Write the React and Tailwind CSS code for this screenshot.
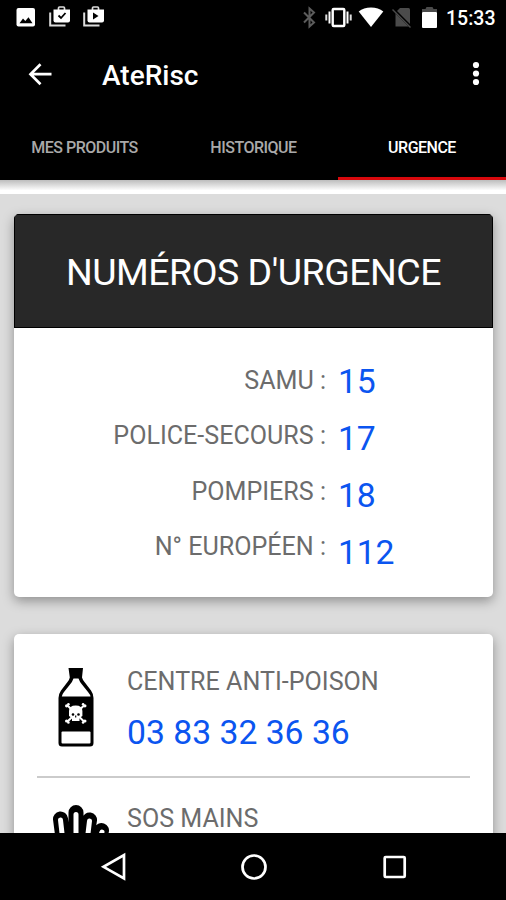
import React, { useState } from 'react';

const TABS = ['MES PRODUITS', 'HISTORIQUE', 'URGENCE'];

const EMERGENCY_NUMBERS = [
  { label: 'SAMU :', number: '15' },
  { label: 'POLICE-SECOURS :', number: '17' },
  { label: 'POMPIERS :', number: '18' },
  { label: 'N° EUROPÉEN :', number: '112' },
];

const StatusBar = () => (
  <div className="flex h-9 shrink-0 items-center pl-4 pr-[11px]">
    <svg width="20" height="36" viewBox="0 0 20 36">
      <rect x="0.5" y="8" width="18.500" height="18.500" rx="2" fill="#fff" />
      <path d="M3.500 23.300 7 18.500 9.300 21 12.500 17.300 16.500 23.300Z" fill="#000" />
    </svg>
    <svg className="ml-[13px]" width="22" height="36" viewBox="0 0 22 36">
      <path d="M1.200 12.500V25.500H16.500" fill="none" stroke="#ddd" strokeWidth="2" />
      <path d="M9.500 10V8Q9.500 7 10.500 7H14.500Q15.500 7 15.500 8V10" fill="none" stroke="#ddd" strokeWidth="1.700" />
      <path d="M4.500 9.500H21V20.500Q21 22.500 19 22.500H6.500Q4.500 22.500 4.500 20.500Z" fill="#fff" />
      <path d="M9.500 15.500 12 18 16.500 13" fill="none" stroke="#000" strokeWidth="1.800" />
    </svg>
    <svg className="ml-3" width="22" height="36" viewBox="0 0 22 36">
      <path d="M1.200 12.500V25.500H16.500" fill="none" stroke="#ddd" strokeWidth="2" />
      <path d="M9.500 10V8Q9.500 7 10.500 7H14.500Q15.500 7 15.500 8V10" fill="none" stroke="#ddd" strokeWidth="1.700" />
      <path d="M4.500 9.500H21V20.500Q21 22.500 19 22.500H6.500Q4.500 22.500 4.500 20.500Z" fill="#fff" />
      <path d="M10 12.500 15.500 16 10 19.500Z" fill="#000" />
    </svg>

    {/* System icons */}
    <svg className="ml-auto" width="15" height="36" viewBox="0 0 15 36">
      <path d="M2 12.500 12 22.500 7.500 26.500V8.500L12 12.500 2 22.500" fill="none" stroke="#5c5c5c" strokeWidth="2" />
    </svg>
    <svg className="ml-[8px]" width="27" height="36" viewBox="0 0 27 36">
      <rect x="7.700" y="9" width="11.600" height="17" rx="1" fill="none" stroke="#fff" strokeWidth="2.400" />
      <path d="M4.500 11.500V23.500M22.500 11.500V23.500" stroke="#fff" strokeWidth="2" />
      <path d="M1.300 14.500V20.500M25.700 14.500V20.500" stroke="#ddd" strokeWidth="2" />
    </svg>
    <svg className="ml-[6px]" width="26" height="36" viewBox="0 0 26 36">
      <path d="M13 27 .7 11.500C4 8.800 8 7.600 13 7.600S22 8.800 25.300 11.500Z" fill="#fff" />
    </svg>
    <svg className="ml-[8px]" width="20" height="36" viewBox="0 0 20 36">
      <path d="M8 8H16.500Q18 8 18 9.500V26.500H3.500V12.500Z" fill="#4b4b4b" />
      <path d="M.5 8.500 19 27" stroke="#000" strokeWidth="3" />
      <path d="M.5 9.500 18.500 27.500" stroke="#4b4b4b" strokeWidth="1.400" />
    </svg>
    <svg className="ml-[9px]" width="17" height="36" viewBox="0 0 17 36">
      <path d="M1 12V9H4.500L5.500 7H11.500L12.500 9H16V12Z" fill="#4b4b4b" />
      <rect x="1" y="12" width="15" height="16" rx="1" fill="#fff" />
    </svg>
    <span className="ml-[8px] w-[49px] whitespace-nowrap pt-px text-[19.500px] font-medium leading-9 text-white">15:33</span>
  </div>
);

const Toolbar = () => (
  <div className="flex h-[78px] shrink-0 items-center pl-7 pr-[25px]">
    <svg width="24" height="24" viewBox="0 0 24 24" fill="none" stroke="#fff" strokeWidth="2.700">
      <path d="M23.500 11.200H3M12.500 1.200 2.500 11.200 12.500 21.200" />
    </svg>
    <h1 className="ml-[50px] pt-0.5 text-[28px] font-medium leading-8 text-white">AteRisc</h1>
    <svg className="ml-auto" width="10" height="28" viewBox="0 0 10 28" fill="#fff">
      <circle cx="5" cy="4" r="3.100" />
      <circle cx="5" cy="12.500" r="3.100" />
      <circle cx="5" cy="21" r="3.100" />
    </svg>
  </div>
);

const PoisonIcon = () => (
  <svg width="36" height="80" viewBox="58 667 36 80">
    <path d="M68.500 668H83L82 677.500Q82.500 679.500 84.500 682L91 690.500Q93.500 694 93.500 698V743Q93.500 746.500 90 746.500H62Q58.500 746.500 58.500 743V698Q58.500 694 61 690.500L67.500 682Q69.500 679.500 69.800 677.500Z" fill="#000" />
    <path d="M73.500 678.500H78.500Q79.500 681.500 82 684.500L88 692Q90.500 695 90.500 696.500H61.800Q62 694.500 64 692L70 684.500Q72.500 681.500 73.500 678.500Z" fill="#fff" />
    <rect x="61.500" y="731.500" width="29" height="12" rx="1" fill="#fff" />
    {/* Skull and crossbones */}
    <path d="M67.500 705.500 84 721.500M84 705.500 67.500 721.500" stroke="#fff" strokeWidth="2" />
    <g fill="#fff">
      <circle cx="66.600" cy="705.800" r="1.600" />
      <circle cx="68.400" cy="704.300" r="1.300" />
      <circle cx="84.900" cy="705.800" r="1.600" />
      <circle cx="83.100" cy="704.300" r="1.300" />
      <circle cx="66.600" cy="721" r="1.600" />
      <circle cx="68.400" cy="722.500" r="1.300" />
      <circle cx="84.900" cy="721" r="1.600" />
      <circle cx="83.100" cy="722.500" r="1.300" />
      <path d="M69 711Q69 705.500 75.700 705.500T82.400 711V716L79.500 718V721H72V718L69 716Z" />
    </g>
    <circle cx="73" cy="714.500" r="1.300" fill="#000" />
    <circle cx="78.500" cy="714.500" r="1.300" fill="#000" />
    <path d="M75.700 715.500V717.500" stroke="#000" strokeWidth="1.200" />
  </svg>
);

const HandIcon = () => (
  <svg width="58" height="70" viewBox="52 805 58 70" strokeLinecap="round" strokeLinejoin="round">
    <path d="M60.500 819 63.500 842M76 812.500V842M89.500 820 86 842M101.500 830.500 96 846" stroke="#000" strokeWidth="15" />
    <path d="M60 829H98V858Q90 868 78 868T60 856Z" fill="#000" />
    <path d="M60.500 820 63 842M76 814.500V842M89.500 821 87 842M102 832 98 844" stroke="#fff" strokeWidth="5" />
  </svg>
);

const NavBar = () => (
  <div className="flex h-[67px] shrink-0 items-center bg-black">
    <svg className="ml-[100px]" width="28" height="30" viewBox="0 0 28 30" fill="none" stroke="#fff" strokeWidth="2.700">
      <path d="M24 3V26.500L3.500 14.800Z" />
    </svg>
    <svg className="ml-[112px]" width="28" height="28" viewBox="0 0 28 28" fill="none" stroke="#fff" strokeWidth="2.700">
      <circle cx="14" cy="14" r="11.500" />
    </svg>
    <svg className="ml-[113px]" width="28" height="28" viewBox="0 0 28 28" fill="none" stroke="#fff" strokeWidth="2.700">
      <rect x="3.700" y="4" width="20" height="20" rx="1" />
    </svg>
  </div>
);

function App() {
  const [activeTab, setActiveTab] = useState('URGENCE');

  return (
    <div className="flex h-[900px] w-[506px] flex-col overflow-hidden bg-black font-[Roboto,sans-serif]">
      <StatusBar />
      <Toolbar />

      {/* Tabs */}
      <div className="grid h-[66px] shrink-0 grid-cols-[169px_169px_168px]">
        {TABS.map((tab) => (
          <button
            key={tab}
            onClick={() => setActiveTab(tab)}
            className={`whitespace-nowrap border-b-[3px] pt-[5px] text-[16px] font-medium tracking-[-0.5px] ${
              activeTab === tab ? 'border-[#d8080c] text-white' : 'border-transparent text-[#a9a9a9]'
            }`}
          >
            {tab}
          </button>
        ))}
      </div>

      <div className="h-[14px] shrink-0 bg-linear-to-b from-[#bdbdbd] to-white to-75%" />

      <main className="flex min-h-0 flex-1 flex-col gap-[37px] overflow-hidden bg-[#dcdcdc] pl-[14px] pr-[13px] pt-[19.500px]">
        <section className="h-[383px] shrink-0 overflow-hidden rounded-[5px] bg-white shadow-[0_4px_12px_rgba(0,0,0,0.35)]">
          <h2 className="flex h-[114px] items-center justify-center border border-black bg-[#282828] pt-[3px] text-[37.500px] tracking-[-0.5px] text-white">
            NUMÉROS D&apos;URGENCE
          </h2>
          <div className="flex gap-3 pt-6">
            <div className="w-[312px] pt-px text-right text-[25.100px] leading-[55.500px] text-[#6c6c6c]">
              {EMERGENCY_NUMBERS.map(({ label }) => (
                <p key={label}>{label}</p>
              ))}
            </div>
            <div className="pt-px text-[33.700px] leading-[57px] tracking-[-0.2px] text-[#0b55f0]">
              {EMERGENCY_NUMBERS.map(({ number }) => (
                <p key={number}>{number}</p>
              ))}
            </div>
          </div>
        </section>

        <section className="h-[420px] shrink-0 rounded-[5px] bg-white px-[23px] shadow-[0_4px_12px_rgba(0,0,0,0.35)]">
          <div className="flex h-[144px] border-b-2 border-[#cbcbcb] pl-[21px] pt-[33px]">
            <PoisonIcon />
            <div className="ml-[33px] pt-px">
              <p className="text-[25.100px] leading-[28px] text-[#6c6c6c]">CENTRE ANTI-POISON</p>
              <a className="block text-[33.700px] leading-[74px] text-[#0b55f0]">03 83 32 36 36</a>
            </div>
          </div>
          <div className="flex pl-[15px] pt-[27px]">
            <HandIcon />
            <p className="ml-[17px] text-[25.100px] leading-[28px] text-[#6c6c6c]">SOS MAINS</p>
          </div>
        </section>
      </main>

      <NavBar />
    </div>
  );
}

export default App;
